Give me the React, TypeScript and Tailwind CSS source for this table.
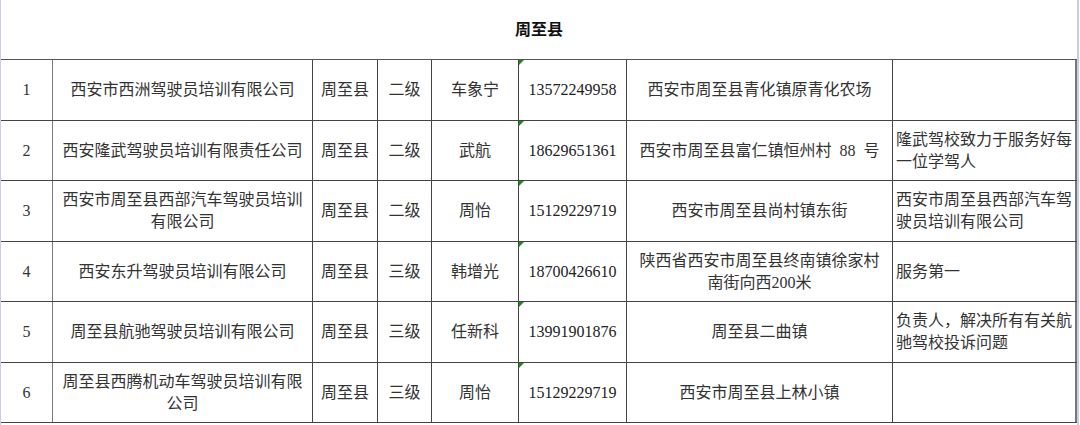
import React from "react";

type Row = {
  no: string;
  name: string;
  county: string;
  level: string;
  contact: string;
  phone: string;
  address: string;
  note: string;
};

const rows: Row[] = [
  { no: "1", name: "西安市西洲驾驶员培训有限公司", county: "周至县", level: "二级", contact: "车象宁", phone: "13572249958", address: "西安市周至县青化镇原青化农场", note: "" },
  { no: "2", name: "西安隆武驾驶员培训有限责任公司", county: "周至县", level: "二级", contact: "武航", phone: "18629651361", address: "西安市周至县富仁镇恒州村\u00a0\u00a088\u00a0\u00a0号", note: "隆武驾校致力于服务好每一位学驾人" },
  { no: "3", name: "西安市周至县西部汽车驾驶员培训有限公司", county: "周至县", level: "二级", contact: "周怡", phone: "15129229719", address: "西安市周至县尚村镇东街", note: "西安市周至县西部汽车驾驶员培训有限公司" },
  { no: "4", name: "西安东升驾驶员培训有限公司", county: "周至县", level: "三级", contact: "韩增光", phone: "18700426610", address: "陕西省西安市周至县终南镇徐家村南街向西200米", note: "服务第一" },
  { no: "5", name: "周至县航驰驾驶员培训有限公司", county: "周至县", level: "三级", contact: "任新科", phone: "13991901876", address: "周至县二曲镇", note: "负责人，解决所有有关航驰驾校投诉问题" },
  { no: "6", name: "周至县西腾机动车驾驶员培训有限公司", county: "周至县", level: "三级", contact: "周怡", phone: "15129229719", address: "西安市周至县上林小镇", note: "" },
];

const cell = "flex items-center justify-center text-center border-r border-[#444] px-[4px] leading-[22px]";

export default function App() {
  return (
    <div className="w-[1080px] h-[425px] bg-white flex text-[16px] text-[#333] font-['Liberation_Serif','Noto_Sans_CJK_SC',serif]">
      <div className="w-[1px] h-full bg-[#c9cde8]" />
      <div className="w-[1076px] flex flex-col">
        <div className="h-[60px] border-b border-[#555] flex items-center justify-center font-bold text-[#111] pt-[1px]">
          周至县
        </div>
        {rows.map((r, i) => (
          <div
            key={r.no}
            className={`grid grid-cols-[52px_260px_65px_54px_87px_108px_266px_184px] border-b border-[#444] ${
              i % 2 === 0 ? "h-[61px]" : "h-[60px]"
            }`}
          >
            <div className={`${cell} border-r-[#7a7a7a]`}>{r.no}</div>
            <div className={cell}>{r.name}</div>
            <div className={cell}>{r.county}</div>
            <div className={cell}>{r.level}</div>
            <div className={cell}>{r.contact}</div>
            <div className={`${cell} relative text-[#222]`}>
              <span className="absolute left-0 top-0 w-0 h-0 border-t-[5px] border-t-[#1c8a1c] border-r-[5px] border-r-transparent" />
              {r.phone}
            </div>
            <div className={`${cell} px-[8px]`}>{r.address}</div>
            <div className="flex items-center border-r-2 border-[#777] pl-[3px] pr-[2px] leading-[22px]">
              <span>{r.note}</span>
            </div>
          </div>
        ))}
      </div>
      <div className="w-[2px] h-full bg-[#c9cde8]" />
    </div>
  );
}
